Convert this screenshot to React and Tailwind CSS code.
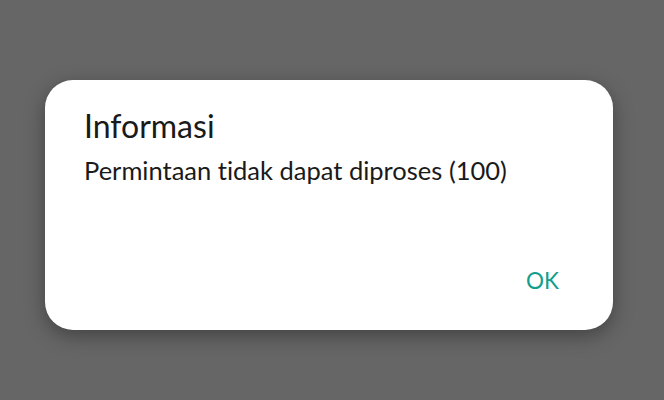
import React from 'react';

const App = () => {
  return (
    <div className="w-[664px] h-[400px] bg-[#666666] pt-[80px] pl-[45px] [font-variant-ligatures:none]" style={{ fontFamily: 'Lato, "Noto Sans", sans-serif' }}>
      <div className="w-[568px] h-[250px] bg-white rounded-[28px] shadow-[0_6px_20px_rgba(0,0,0,0.35)] flex flex-col pl-[39px] pr-[54px] pt-[26px] pb-[34px]">
        <h2 className="text-[32px] leading-[40px] text-[#1a1a1a]">Informasi</h2>
        <p className="text-[25.5px] leading-[34px] text-[#1a1a1a] mt-[7px]">Permintaan tidak dapat diproses (100)</p>
        <div className="flex-1" />
        <div className="flex justify-end">
          <button className="text-[22.5px] leading-[30px] text-[#149e8c]">OK</button>
        </div>
      </div>
    </div>
  );
};

export default App;
